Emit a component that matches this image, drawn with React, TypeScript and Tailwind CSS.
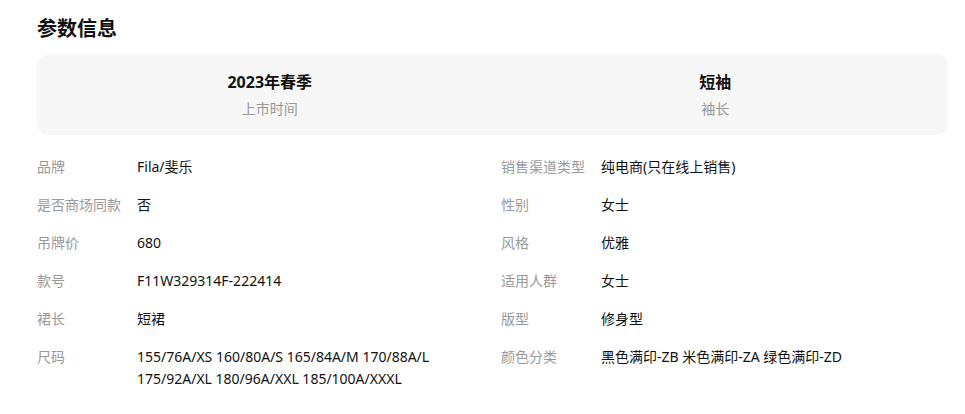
const highlights = [
  { value: "2023年春季", label: "上市时间" },
  { value: "短袖", label: "袖长" },
];

const rows: [string, string, string, string][] = [
  ["品牌", "Fila/斐乐", "销售渠道类型", "纯电商(只在线上销售)"],
  ["是否商场同款", "否", "性别", "女士"],
  ["吊牌价", "680", "风格", "优雅"],
  ["款号", "F11W329314F-222414", "适用人群", "女士"],
  ["裙长", "短裙", "版型", "修身型"],
  [
    "尺码",
    "155/76A/XS 160/80A/S 165/84A/M 170/88A/L 175/92A/XL 180/96A/XXL 185/100A/XXXL",
    "颜色分类",
    "黑色满印-ZB 米色满印-ZA 绿色满印-ZD",
  ],
];

function Param({ label, value }: { label: string; value: string }) {
  return (
    <div className="flex py-2 text-sm leading-[22px]">
      <div className="w-[100px] shrink-0 text-[#999]">{label}</div>
      <div className="min-w-0 flex-1 pr-4 text-[#111]">{value}</div>
    </div>
  );
}

export default function App() {
  return (
    <div
      className="min-h-screen bg-white pl-[37px] pr-[17px] pt-[15px]"
      style={{ fontFamily: '"Noto Sans", "Noto Sans CJK SC", sans-serif' }}
    >
      <h2 className="text-[20px] font-bold leading-[28px] text-[#111]">参数信息</h2>

      <div className="mt-[11px] grid h-[81px] grid-cols-2 rounded-xl bg-[#f7f7f7] px-[10px]">
        {highlights.map((item) => (
          <div key={item.label} className="flex flex-col items-center justify-center gap-[5px]">
            <span className="text-base font-bold leading-6 text-[#111]">{item.value}</span>
            <span className="text-sm leading-5 text-[#999]">{item.label}</span>
          </div>
        ))}
      </div>

      <div className="mt-[13px] grid grid-cols-[464px_1fr]">
        {rows.map(([l1, v1, l2, v2]) => (
          <div key={l1} className="contents">
            <Param label={l1} value={v1} />
            <Param label={l2} value={v2} />
          </div>
        ))}
      </div>
    </div>
  );
}
